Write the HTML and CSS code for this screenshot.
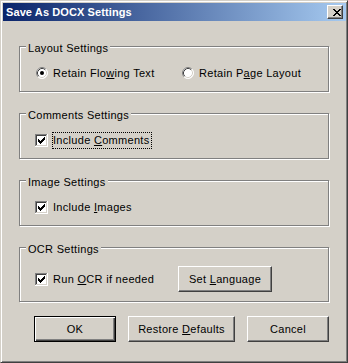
FILE: index.html
```html
<!DOCTYPE html>
<html>
<head>
<meta charset="utf-8">
<title>Save As DOCX Settings</title>
<link rel="stylesheet" href="styles.css">
</head>
<body>
<div class="window">
  <div class="titlebar">
    <span class="title">Save As DOCX Settings</span>
    <span class="close"><svg width="8" height="7" viewBox="0 0 8 7" shape-rendering="crispEdges"><path fill="#000" d="M0 0h2v1H0z M6 0h2v1H6z M1 1h2v1H1z M5 1h2v1H5z M2 2h4v1H2z M3 3h2v1H3z M2 4h4v1H2z M1 5h2v1H1z M5 5h2v1H5z M0 6h2v1H0z M6 6h2v1H6z"/></svg></span>
  </div>
  <div class="content">
    <div class="group group-first">
      <div class="legend">Layout Settings</div>
      <div class="row">
        <div class="opt opt-layout">
          <span class="ctl"><svg class="radio" width="12" height="12" viewBox="0 0 12 12"><circle cx="6" cy="6" r="5.5" fill="#fff"/><path d="M2.11 9.89A5.5 5.5 0 0 1 9.89 2.11" fill="none" stroke="#808080"/><path d="M9.89 2.11A5.5 5.5 0 0 1 2.11 9.89" fill="none" stroke="#fff"/><path d="M2.82 9.18A4.5 4.5 0 0 1 9.18 2.82" fill="none" stroke="#404040"/><path d="M9.18 2.82A4.5 4.5 0 0 1 2.82 9.18" fill="none" stroke="#d4d0c8"/><circle cx="6" cy="6" r="2" fill="#000"/></svg></span>
          <span class="label">Retain Flo<u>w</u>ing Text</span>
        </div>
        <div class="opt">
          <span class="ctl"><svg class="radio" width="12" height="12" viewBox="0 0 12 12"><circle cx="6" cy="6" r="5.5" fill="#fff"/><path d="M2.11 9.89A5.5 5.5 0 0 1 9.89 2.11" fill="none" stroke="#808080"/><path d="M9.89 2.11A5.5 5.5 0 0 1 2.11 9.89" fill="none" stroke="#fff"/><path d="M2.82 9.18A4.5 4.5 0 0 1 9.18 2.82" fill="none" stroke="#404040"/><path d="M9.18 2.82A4.5 4.5 0 0 1 2.82 9.18" fill="none" stroke="#d4d0c8"/></svg></span>
          <span class="label">Retain P<u>a</u>ge Layout</span>
        </div>
      </div>
    </div>

    <div class="group">
      <div class="legend">Comments Settings</div>
      <div class="row">
        <div class="opt">
          <span class="ctl"><svg width="13" height="13" viewBox="0 0 13 13" shape-rendering="crispEdges"><rect width="13" height="13" fill="#fff"/><path fill="#808080" d="M0 0h12v1H0z M0 0h1v12H0z"/><path fill="#404040" d="M1 1h10v1H1z M1 1h1v10H1z"/><path fill="#d4d0c8" d="M1 11h11v1H1z M11 1h1v11h-1z"/><path fill="#000" d="M9 3h1v1H9z M8 4h2v1H8z M3 5h1v1H3z M7 5h3v1H7z M3 6h2v1H3z M6 6h3v1H6z M3 7h5v1H3z M4 8h3v1H4z M5 9h1v1H5z"/></svg></span>
          <span class="label focus">Include <u>C</u>omments</span>
        </div>
      </div>
    </div>

    <div class="group">
      <div class="legend">Image Settings</div>
      <div class="row">
        <div class="opt">
          <span class="ctl"><svg width="13" height="13" viewBox="0 0 13 13" shape-rendering="crispEdges"><rect width="13" height="13" fill="#fff"/><path fill="#808080" d="M0 0h12v1H0z M0 0h1v12H0z"/><path fill="#404040" d="M1 1h10v1H1z M1 1h1v10H1z"/><path fill="#d4d0c8" d="M1 11h11v1H1z M11 1h1v11h-1z"/><path fill="#000" d="M9 3h1v1H9z M8 4h2v1H8z M3 5h1v1H3z M7 5h3v1H7z M3 6h2v1H3z M6 6h3v1H6z M3 7h5v1H3z M4 8h3v1H4z M5 9h1v1H5z"/></svg></span>
          <span class="label">Include <u>I</u>mages</span>
        </div>
      </div>
    </div>

    <div class="group group-ocr">
      <div class="legend">OCR Settings</div>
      <div class="row row-ocr">
        <div class="opt opt-ocr">
          <span class="ctl"><svg width="13" height="13" viewBox="0 0 13 13" shape-rendering="crispEdges"><rect width="13" height="13" fill="#fff"/><path fill="#808080" d="M0 0h12v1H0z M0 0h1v12H0z"/><path fill="#404040" d="M1 1h10v1H1z M1 1h1v10H1z"/><path fill="#d4d0c8" d="M1 11h11v1H1z M11 1h1v11h-1z"/><path fill="#000" d="M9 3h1v1H9z M8 4h2v1H8z M3 5h1v1H3z M7 5h3v1H7z M3 6h2v1H3z M6 6h3v1H6z M3 7h5v1H3z M4 8h3v1H4z M5 9h1v1H5z"/></svg></span>
          <span class="label">Run <u>O</u>CR if needed</span>
        </div>
        <button class="btn btn-lang" type="button">Set <u>L</u>anguage</button>
      </div>
    </div>

    <div class="buttons">
      <button class="btn btn-default" type="button">OK</button>
      <button class="btn btn-wide" type="button">Restore <u>D</u>efaults</button>
      <button class="btn" type="button">Cancel</button>
    </div>
  </div>
</div>
</body>
</html>
```

FILE: styles.css
```css
* {
  box-sizing: border-box;
}

html,
body {
  margin: 0;
  padding: 0;
}

body {
  background: #d4d0c8;
  font-family: "Liberation Sans", Arial, sans-serif;
  font-size: 11px;
  letter-spacing: 0.3px;
  color: #000;
}

.window {
  width: 348px;
  height: 363px;
  border: 1px solid;
  border-color: #d4d0c8 #404040 #404040 #d4d0c8;
  box-shadow: inset 1px 1px 0 #fff, inset -1px -1px 0 #808080;
  padding: 2px 1px 1px 2px;
  background: #d4d0c8;
  display: flex;
  flex-direction: column;
}

.titlebar {
  height: 18px;
  flex: none;
  background: linear-gradient(to right, #0a246a, #a6caf0);
  display: flex;
  align-items: center;
  justify-content: space-between;
  padding: 0 3px;
  color: #fff;
  font-weight: bold;
  letter-spacing: 0.1px;
  line-height: 13px;
}

.close {
  width: 16px;
  height: 14px;
  background: #d4d0c8;
  border: 1px solid;
  border-color: #fff #404040 #404040 #fff;
  box-shadow: inset -1px -1px 0 #808080;
  padding: 3px 0 0 5px;
}

.close svg {
  display: block;
}

.content {
  padding: 0 17px 0 16px;
}

.group {
  border: 1px solid #808080;
  box-shadow: inset 1px 1px 0 #fff, 1px 1px 0 #fff;
  height: 46px;
  margin-top: 21px;
}

.group-first {
  margin-top: 25px;
}

.group-ocr {
  height: 55px;
}

.legend {
  width: fit-content;
  margin: -5px 0 0 6px;
  padding: 0 2px;
  background: #d4d0c8;
  line-height: 13px;
}

.row {
  display: flex;
  align-items: center;
  height: 17px;
  margin-top: 10px;
  padding-left: 15px;
}

.row-ocr {
  height: 26px;
}

.opt {
  display: flex;
  align-items: center;
  gap: 4px;
  flex: none;
}

.opt-layout {
  width: 146px;
}

.opt-ocr {
  width: 143px;
}

.ctl {
  width: 13px;
  height: 13px;
  display: flex;
  align-items: flex-start;
}

.ctl svg {
  display: block;
}

.radio {
  margin-left: 1px;
}

.label {
  line-height: 13px;
  padding: 1px 1px 1px 0;
  border: 1px dotted transparent;
  white-space: nowrap;
}

.label.focus {
  border-color: #000;
}

.buttons {
  display: flex;
  justify-content: flex-end;
  gap: 12px;
  margin-top: 14px;
}

.btn {
  width: 82px;
  height: 26px;
  padding: 0;
  margin: 0;
  font: inherit;
  letter-spacing: inherit;
  line-height: 13px;
  color: #000;
  background: #d4d0c8;
  border: 1px solid;
  border-color: #fff #404040 #404040 #fff;
  box-shadow: inset -1px -1px 0 #808080;
  border-radius: 0;
  white-space: nowrap;
}

.btn-default {
  border: 1px solid #000;
  box-shadow: inset 1px 1px 0 #fff, inset -1px -1px 0 #404040, inset -2px -2px 0 #808080;
}

.btn-wide {
  width: 107px;
}

.btn-lang {
  width: 94px;
}
```
